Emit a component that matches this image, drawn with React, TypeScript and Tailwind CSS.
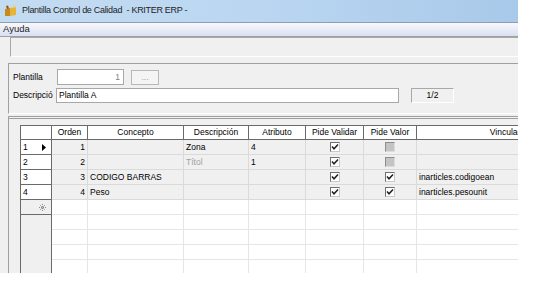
import React from "react";

const cols = [
  { key: "orden", label: "Orden", w: 36 },
  { key: "concepto", label: "Concepto", w: 96 },
  { key: "desc", label: "Descripción", w: 65 },
  { key: "attr", label: "Atributo", w: 57 },
  { key: "val", label: "Pide Validar", w: 58 },
  { key: "pval", label: "Pide Valor", w: 53 },
  { key: "vinc", label: "Vinculación", w: 190 },
];

type Row = {
  orden: string;
  concepto: string;
  desc: string;
  descGray?: boolean;
  attr: string;
  val: boolean;
  pval: "on" | "off";
  vinc: string;
};

const rows: Row[] = [
  { orden: "1", concepto: "", desc: "Zona", attr: "4", val: true, pval: "off", vinc: "" },
  { orden: "2", concepto: "", desc: "Títol", descGray: true, attr: "1", val: true, pval: "off", vinc: "" },
  { orden: "3", concepto: "CODIGO BARRAS", desc: "", attr: "", val: true, pval: "on", vinc: "inarticles.codigoean" },
  { orden: "4", concepto: "Peso", desc: "", attr: "", val: true, pval: "on", vinc: "inarticles.pesounit" },
];

function Check({ on, disabled }: { on: boolean; disabled?: boolean }) {
  if (disabled)
    return (
      <div className="h-[10px] w-[10px] border border-[#8e8e8e] border-r-[#dcdcdc] border-b-[#dcdcdc] bg-[#c4c4c4]" />
    );
  return (
    <div className="flex h-[10px] w-[10px] items-center justify-center border border-[#6f6f6f] border-r-[#c8c8c8] border-b-[#c8c8c8] bg-white">
      {on && (
        <svg width="8" height="8" viewBox="0 0 8 8">
          <path d="M1 3.6 L3 5.8 L7 1.4" stroke="#202020" strokeWidth="1.5" fill="none" />
        </svg>
      )}
    </div>
  );
}

function AppIcon() {
  return (
    <svg width="13" height="12" viewBox="0 0 13 12">
      <path d="M1 4 L6 3 L6 11 L1 11 Z" fill="#c98a1c" />
      <path d="M6 3 L12 2 L12 10 L6 11 Z" fill="#e7b43a" />
      <path d="M2 1 L4 0.5 L5 3.5 L3 4 Z" fill="#8a5a14" />
      <path d="M9 0.5 L11 0 L11.5 2.5 L9.5 3 Z" fill="#f2cf5a" />
    </svg>
  );
}

export default function App() {
  const cell = "h-[15px] shrink-0 border-r border-b border-[#dadada] px-[2px] leading-[14px] overflow-hidden whitespace-nowrap";
  return (
    <div className="relative h-[282px] w-[535px] overflow-hidden bg-white font-['Liberation_Sans',sans-serif] text-[8.5px] text-black">
      <div className="flex h-[273px] w-[518px] flex-col bg-[#f0f0f0]">
        {/* title bar */}
        <div className="flex h-[22px] shrink-0 items-center gap-[5px] bg-gradient-to-r from-[#c4dcf2] via-[#bad6f1] to-[#a9c9ea] pl-[4px] text-[9px] tracking-[-0.3px] text-[#1e1e1e]">
          <AppIcon />
          <span className="whitespace-pre">Plantilla Control de Calidad  - KRITER ERP -</span>
        </div>
        {/* menu */}
        <div className="flex h-[15px] shrink-0 items-center border-t border-[#8e9db2] border-b border-b-[#a0a0a0] bg-gradient-to-b from-[#f8f9fc] to-[#d9dff2] pl-[3px] text-[9.5px] text-[#1e1e1e]">
          Ayuda
        </div>
        {/* toolbar */}
        <div className="flex h-[20px] shrink-0 pl-[10px]">
          <div className="flex-1 border-l border-t border-[#a8a8a8] border-b border-b-white" />
        </div>
        {/* header form */}
        <div className="mt-[6px] ml-[8px] flex h-[51px] shrink-0 flex-col border-t border-l border-[#a0a0a0] border-b border-b-white pl-[4px] pt-[5px]">
          <div className="flex h-[16px] items-center">
            <span className="w-[44px]">Plantilla</span>
            <div className="flex h-[16px] w-[67px] items-center justify-end border border-[#a8a8a8] bg-white pr-[3px] text-[#808080]">1</div>
            <div className="ml-[7px] flex h-[15px] w-[28px] items-center justify-center border border-[#b8b8b8] bg-[#f4f4f4] text-[#a0a0a0] leading-none">...</div>
          </div>
          <div className="mt-[3px] flex h-[15px] items-center">
            <span className="w-[43px]">Descripció</span>
            <div className="flex h-[15px] w-[343px] items-center border border-[#a8a8a8] bg-white pl-[2px]">Plantilla A</div>
            <div className="ml-[12px] flex h-[15px] w-[43px] items-center justify-center border border-[#a8a8a8] border-r-white border-b-white">1/2</div>
          </div>
        </div>
        {/* grid panel */}
        <div className="mt-[2px] ml-[8px] flex min-h-0 flex-1 flex-col border-t-[3px] border-double border-l border-[#a0a0a0] pl-[11px] pt-[6px]">
          <div className="flex min-h-0 flex-1 overflow-hidden">
            {/* row headers */}
            <div className="flex w-[32px] shrink-0 flex-col border-l border-r border-t border-[#6a6a6a]">
              <div className="h-[14px] shrink-0 border-b border-[#6a6a6a] bg-white" />
              {rows.map((r, i) => (
                <div key={i} className="flex h-[15px] shrink-0 items-center justify-between border-b border-[#6a6a6a] bg-white pl-[2px] pr-[5px]">
                  <span>{i + 1}</span>
                  {i === 0 && (
                    <svg width="4" height="7" viewBox="0 0 4 7">
                      <path d="M0 0 L4 3.5 L0 7 Z" fill="#000" />
                    </svg>
                  )}
                </div>
              ))}
              <div className="flex h-[15px] shrink-0 items-center justify-end border-b border-[#6a6a6a] pr-[5px]">
                <svg width="7" height="7" viewBox="0 0 7 7">
                  <path d="M3.5 0 V7 M0 3.5 H7 M1 1 L6 6 M6 1 L1 6" stroke="#8a8a8a" strokeWidth="1" strokeDasharray="1 1" />
                </svg>
              </div>
            </div>
            {/* data columns */}
            <div className="flex flex-col border-t border-[#6a6a6a]">
              <div className="flex h-[14px] shrink-0">
                {cols.map((c) => (
                  <div
                    key={c.key}
                    style={{ width: c.w }}
                    className="flex shrink-0 items-center justify-center border-r border-b border-[#6a6a6a] bg-white"
                  >
                    {c.label}
                  </div>
                ))}
              </div>
              {rows.map((r, i) => (
                <div key={i} className="flex">
                  <div className={`${cell} w-[36px] text-right`}>{r.orden}</div>
                  <div className={`${cell} w-[96px]`}>{r.concepto}</div>
                  <div className={`${cell} w-[65px] ${r.descGray ? "text-[#a0a0a0]" : ""}`}>{r.desc}</div>
                  <div className={`${cell} w-[57px]`}>{r.attr}</div>
                  <div className={`${cell} flex w-[58px] items-center justify-center`}>
                    <Check on={r.val} />
                  </div>
                  <div className={`${cell} flex w-[53px] items-center justify-center`}>
                    {r.pval === "on" ? <Check on /> : <Check on={false} disabled />}
                  </div>
                  <div className={`${cell} w-[190px]`}>{r.vinc}</div>
                </div>
              ))}
              {[0, 1, 2, 3, 4].map((i) => (
                <div key={`e${i}`} className="flex">
                  {cols.map((c) => (
                    <div
                      key={c.key}
                      style={{ width: c.w }}
                      className="h-[15px] shrink-0 border-r border-b border-[#e6e6e6] bg-white"
                    />
                  ))}
                </div>
              ))}
            </div>
          </div>
        </div>
      </div>
    </div>
  );
}
